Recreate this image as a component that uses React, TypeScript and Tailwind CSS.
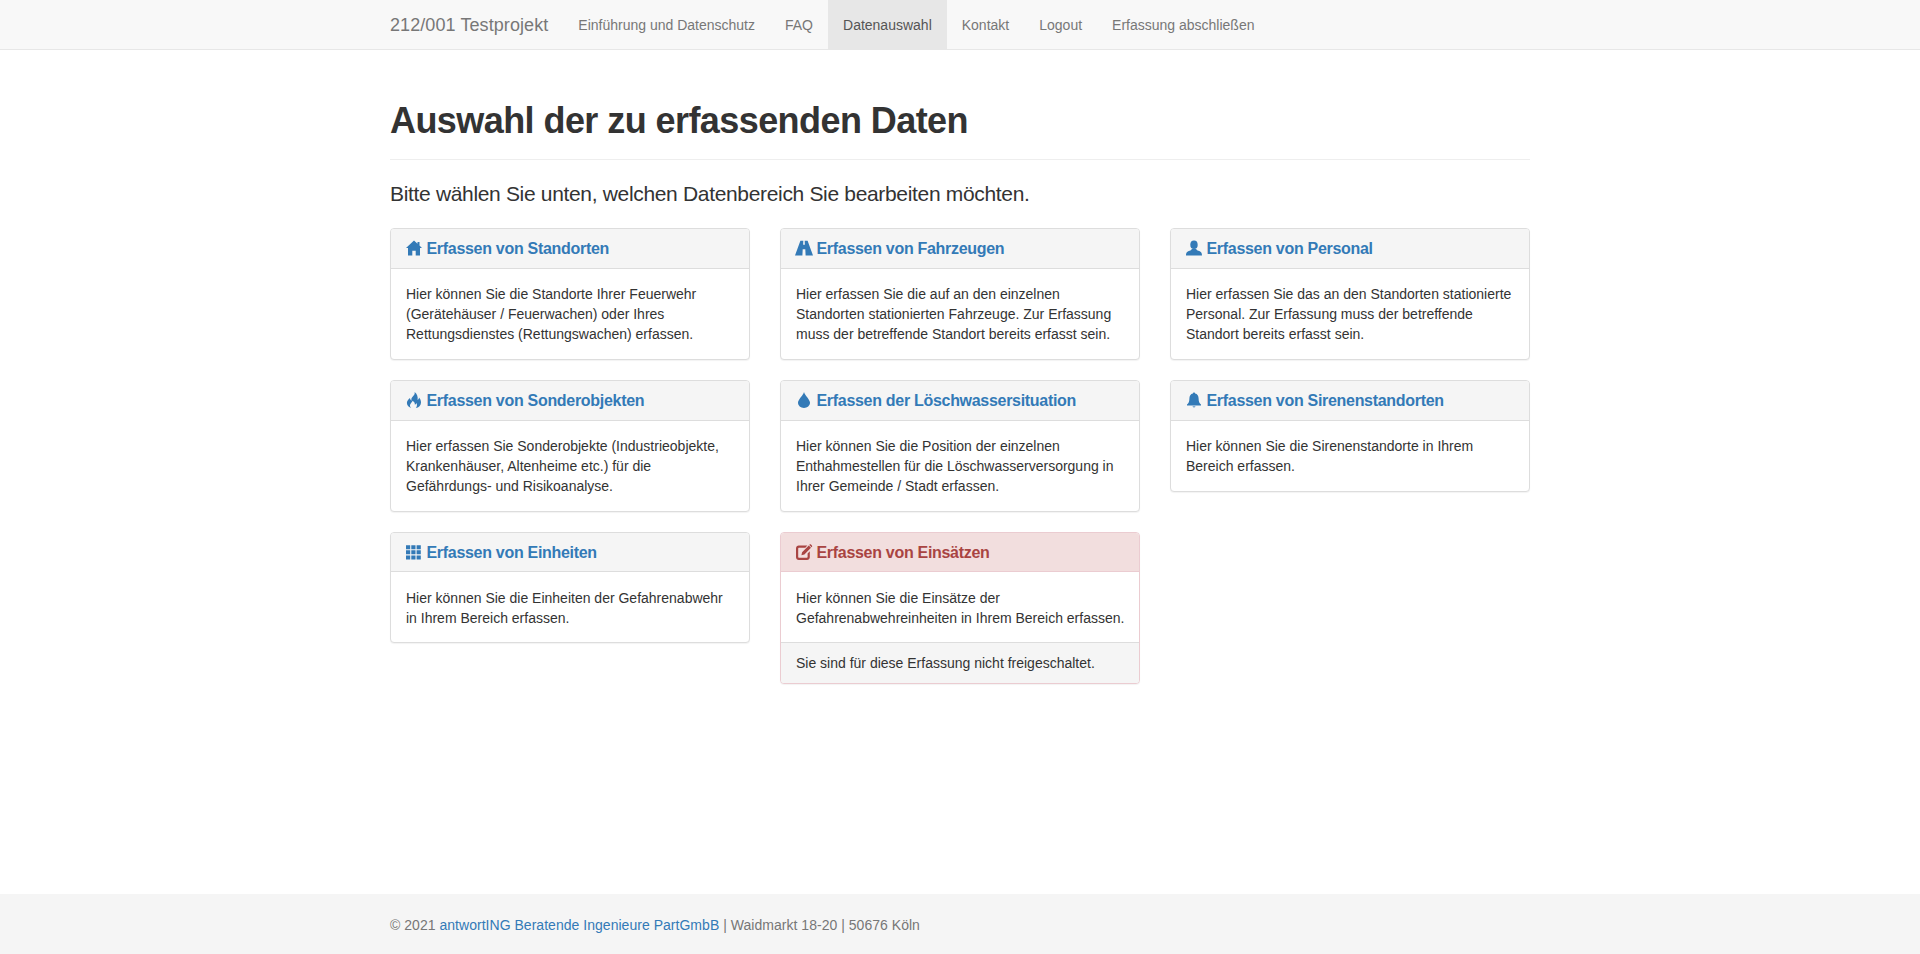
import React from "react";

type IconProps = { className?: string };

const Svg = ({ className, children }: IconProps & { children: React.ReactNode }) => (
  <svg viewBox="0 0 16 16" fill="currentColor" className={`inline-block w-4 h-4 -mt-[1px] overflow-visible shrink-0 ${className ?? ""}`}>
    {children}
  </svg>
);

const HomeIcon = () => (
  <Svg>
    <path d="M8 .4 11.5 3.7V1.9H13.5V5.6L16 8H14V15.6H9.7V10.7H6.3V15.6H2V8H0Z" />
  </Svg>
);
const RoadIcon = () => (
  <Svg>
    <path d="M4.4.8H7.3L7.15 4.8H8.85L8.7.8H11.6L17 15.6H9.6L9.3 9.2H6.7L6.4 15.6H-1Z" />
  </Svg>
);
const UserIcon = () => (
  <Svg>
    <ellipse cx="8" cy="4.7" rx="3.7" ry="4.3" />
    <path d="M0 15.6C0 12 1.6 11.4 3.6 10.7 4.8 10.3 5.6 9.8 5.8 9H10.2C10.4 9.8 11.2 10.3 12.4 10.7 14.4 11.4 16 12 16 15.6Z" />
  </Svg>
);
const FireIcon = () => (
  <Svg>
    <path d="M8.6 0C9.2 2 8 3.2 6.8 4.4 5.6 5.6 5 6.8 5.6 8.6 4.6 8.2 4 7.2 4 6 2.4 7.4.9 9 .9 11 .9 13.6 3 15.4 5.4 16 4.2 15 3.6 13.8 4.2 12.4 4.8 11 6.2 10.2 6.6 8.8 8.4 10 9 11.2 8.8 12.6 9.6 12.4 10.2 11.8 10.4 11 11.4 12.6 11 14.8 9.8 16 12.8 15.4 15 13.4 15 10.4 15 8.4 14 6.8 13 5.6 13 6.8 12.4 7.6 11.6 8 12.2 4.8 11 1.8 8.6 0Z" />
  </Svg>
);
const TintIcon = () => (
  <Svg>
    <path d="M8 0C8.6 3.2 14 7.6 14 10.6 14 13.8 11.3 16 8 16S2 13.8 2 10.6C2 7.6 7.4 3.2 8 0Z" />
  </Svg>
);
const BellIcon = () => (
  <Svg>
    <path d="M8 .4C8.7.4 9.1.9 9.1 1.5 11.4 2 12.6 3.9 12.6 6.4 12.6 9.6 13.4 11 15 12.4V13.4H1V12.4C2.6 11 3.4 9.6 3.4 6.4 3.4 3.9 4.6 2 6.9 1.5 6.9.9 7.3.4 8 .4Z" />
    <path d="M6.6 14H9.4C9.4 14.9 8.8 15.6 8 15.6S6.6 14.9 6.6 14Z" opacity="0.6" />
  </Svg>
);
const ThIcon = () => (
  <Svg>
    <path d="M0 1.2H4.2V5.2H0ZM5.3 1.2H9.5V5.2H5.3ZM10.6 1.2H14.8V5.2H10.6ZM0 6.3H4.2V10.3H0ZM5.3 6.3H9.5V10.3H5.3ZM10.6 6.3H14.8V10.3H10.6ZM0 11.4H4.2V15.4H0ZM5.3 11.4H9.5V15.4H5.3ZM10.6 11.4H14.8V15.4H10.6Z" />
  </Svg>
);
const EditIcon = () => (
  <Svg>
    <path d="M2.8 1.6H11.4L9.3 3.8H3.2C2.6 3.8 2.2 4.2 2.2 4.8V12.8C2.2 13.4 2.6 13.8 3.2 13.8H10.6C11.2 13.8 11.6 13.4 11.6 12.8V9.4L13.8 7.2V13.2C13.8 14.8 12.6 16 11 16H2.8C1.2 16 0 14.8 0 13.2V4.4C0 2.8 1.2 1.6 2.8 1.6Z" />
    <path d="M12.8 1.6 15 3.8 8.4 10.4 5.4 11.2 6.1 8.2ZM13.6.6C14 .2 14.6.2 15 .6L15.9 1.5C16.3 1.9 16.3 2.5 15.9 2.9L15.6 3.2 13.3 .9Z" />
  </Svg>
);

const navLinks = ["Einführung und Datenschutz", "FAQ", "Datenauswahl", "Kontakt", "Logout", "Erfassung abschließen"];

interface PanelProps {
  icon: React.ReactNode;
  title: string;
  lines: string[];
  danger?: boolean;
  footer?: string;
  lastRow?: boolean;
}

const Panel = ({ icon, title, lines, danger, footer, lastRow }: PanelProps) => (
  <div className={`rounded border bg-white shadow-[0_1px_1px_rgba(0,0,0,0.05)] ${danger ? "border-[#ebccd1]" : "border-[#ddd]"}`}>
    <div
      className={`flex items-center px-[15px] border-b rounded-t-[3px] ${lastRow ? "h-[39px]" : "h-[40px]"} ${
        danger ? "bg-[#f2dede] border-[#ebccd1] text-[#a94442]" : "bg-[#f5f5f5] border-[#ddd] text-[#337ab7]"
      }`}
    >
      {icon}
      <h3 className="ml-[4.5px] pt-[1px] text-[16px] leading-[18px] font-bold tracking-[-0.3px]">{title}</h3>
    </div>
    <div className={`px-[15px] text-[14px] leading-[20px] text-[#333] ${lastRow ? "pt-[16px] pb-[14px]" : "py-[15px]"}`}>
      {lines.map((line) => (
        <div key={line} className="whitespace-nowrap">{line}</div>
      ))}
    </div>
    {footer && (
      <div className="px-[15px] py-[10px] bg-[#f5f5f5] border-t border-[#ddd] rounded-b-[3px] text-[14px] leading-[20px] text-[#333]">
        {footer}
      </div>
    )}
  </div>
);

export default function App() {
  return (
    <div className="min-h-screen flex flex-col bg-white font-['Liberation_Sans',Arial,sans-serif]">
      <nav className="h-[50px] bg-[#f8f8f8] border-b border-[#e7e7e7]">
        <div className="w-[1140px] mx-auto flex h-[49px]">
          <div className="pr-[15px] text-[18px] leading-[50px] tracking-[0.08px] text-[#777]">212/001 Testprojekt</div>
          {navLinks.map((link) => (
            <a
              key={link}
              className={`px-[15px] text-[14px] leading-[50px] ${
                link === "Datenauswahl" ? "bg-[#e7e7e7] text-[#555]" : "text-[#777]"
              }`}
            >
              {link}
            </a>
          ))}
        </div>
      </nav>

      <main className="w-[1140px] mx-auto pt-[51px]">
        <div className="pb-[18px] border-b border-[#eee]">
          <h1 className="text-[36px] leading-[39.6px] font-bold tracking-[-0.57px] text-[#333]">Auswahl der zu erfassenden Daten</h1>
        </div>
        <p className="mt-[19px] mb-[20px] text-[21px] leading-[29.4px] tracking-[-0.33px] text-[#333]">
          Bitte wählen Sie unten, welchen Datenbereich Sie bearbeiten möchten.
        </p>
        <div className="grid grid-cols-3 gap-x-[30px] items-start">
          <div className="flex flex-col gap-[20px]">
            <Panel
              icon={<HomeIcon />}
              title="Erfassen von Standorten"
              lines={[
                "Hier können Sie die Standorte Ihrer Feuerwehr",
                "(Gerätehäuser / Feuerwachen) oder Ihres",
                "Rettungsdienstes (Rettungswachen) erfassen.",
              ]}
            />
            <Panel
              icon={<FireIcon />}
              title="Erfassen von Sonderobjekten"
              lines={[
                "Hier erfassen Sie Sonderobjekte (Industrieobjekte,",
                "Krankenhäuser, Altenheime etc.) für die",
                "Gefährdungs- und Risikoanalyse.",
              ]}
            />
            <Panel
              lastRow
              icon={<ThIcon />}
              title="Erfassen von Einheiten"
              lines={["Hier können Sie die Einheiten der Gefahrenabwehr", "in Ihrem Bereich erfassen."]}
            />
          </div>
          <div className="flex flex-col gap-[20px]">
            <Panel
              icon={<RoadIcon />}
              title="Erfassen von Fahrzeugen"
              lines={[
                "Hier erfassen Sie die auf an den einzelnen",
                "Standorten stationierten Fahrzeuge. Zur Erfassung",
                "muss der betreffende Standort bereits erfasst sein.",
              ]}
            />
            <Panel
              icon={<TintIcon />}
              title="Erfassen der Löschwassersituation"
              lines={[
                "Hier können Sie die Position der einzelnen",
                "Enthahmestellen für die Löschwasserversorgung in",
                "Ihrer Gemeinde / Stadt erfassen.",
              ]}
            />
            <Panel
              danger
              lastRow
              icon={<EditIcon />}
              title="Erfassen von Einsätzen"
              lines={["Hier können Sie die Einsätze der", "Gefahrenabwehreinheiten in Ihrem Bereich erfassen."]}
              footer="Sie sind für diese Erfassung nicht freigeschaltet."
            />
          </div>
          <div className="flex flex-col gap-[20px]">
            <Panel
              icon={<UserIcon />}
              title="Erfassen von Personal"
              lines={[
                "Hier erfassen Sie das an den Standorten stationierte",
                "Personal. Zur Erfassung muss der betreffende",
                "Standort bereits erfasst sein.",
              ]}
            />
            <Panel
              icon={<BellIcon />}
              title="Erfassen von Sirenenstandorten"
              lines={["Hier können Sie die Sirenenstandorte in Ihrem", "Bereich erfassen."]}
            />
          </div>
        </div>
      </main>

      <footer className="mt-auto h-[60px] bg-[#f5f5f5] flex items-center">
        <div className="w-[1140px] mx-auto pt-[1px] text-[14px] leading-[20px] tracking-[0.03px] text-[#777]">
          © 2021 <a className="text-[#337ab7]">antwortING Beratende Ingenieure PartGmbB</a> | Waidmarkt 18-20 | 50676 Köln
        </div>
      </footer>
    </div>
  );
}
